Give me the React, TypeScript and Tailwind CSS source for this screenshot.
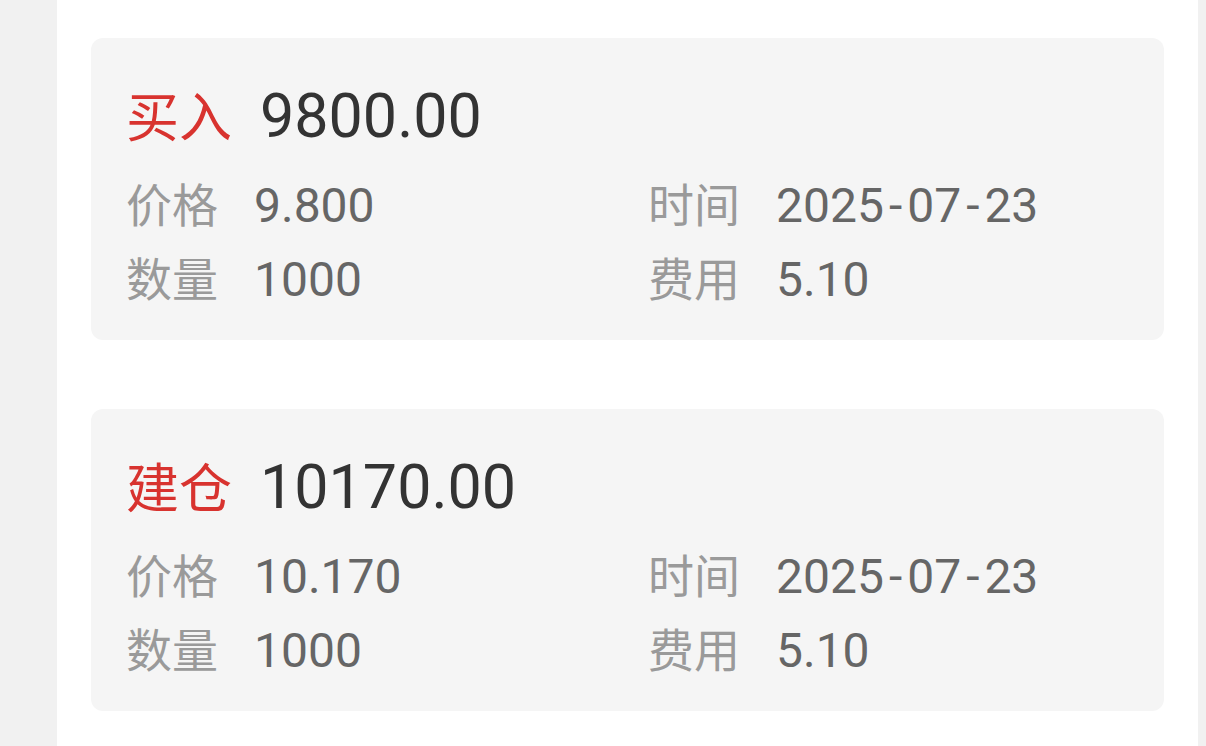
import React from "react";

interface Trade {
  type: string;
  amount: string;
  price: string;
  qty: string;
  date: string;
  fee: string;
}

const trades: Trade[] = [
  { type: "买入", amount: "9800.00", price: "9.800", qty: "1000", date: "2025-07-23", fee: "5.10" },
  { type: "建仓", amount: "10170.00", price: "10.170", qty: "1000", date: "2025-07-23", fee: "5.10" },
];

// the hyphens in the date are drawn wider in the screenshot font
const DateText = ({ value }: { value: string }) => {
  const parts = value.split("-");
  return (
    <>
      {parts.map((p, i) => (
        <React.Fragment key={i}>
          {i > 0 && <span className="mx-[5px]">-</span>}
          {p}
        </React.Fragment>
      ))}
    </>
  );
};

const Field = ({ label, children }: { label: string; children: React.ReactNode }) => (
  <div className="flex items-baseline leading-[73px]">
    <span className="w-[128px] text-[46px] text-[#9a9a9a]">{label}</span>
    <span className="text-[48px] text-[#666666]">{children}</span>
  </div>
);

const TradeCard = ({ trade }: { trade: Trade }) => (
  <div className="h-[302px] rounded-[12px] bg-[#f5f5f5] pl-[35px] pt-[48px]">
    <div className="flex items-baseline leading-[60px]">
      <span className="text-[53px] text-[#d8332f]">{trade.type}</span>
      <span className="ml-[28px] text-[61px] text-[#333333]">{trade.amount}</span>
    </div>
    <div className="mt-[20px] grid grid-cols-[522px_1fr]">
      <Field label="价格">{trade.price}</Field>
      <Field label="时间">
        <DateText value={trade.date} />
      </Field>
      <Field label="数量">{trade.qty}</Field>
      <Field label="费用">{trade.fee}</Field>
    </div>
  </div>
);

export default function App() {
  return (
    <div className="flex h-[746px] w-[1206px] overflow-hidden bg-[#f1f1f1] font-['Roboto','Noto_Sans_CJK_SC',sans-serif]">
      <div className="w-[57px] shrink-0" />
      <div className="flex flex-1 flex-col gap-[69px] bg-white px-[34px] pt-[38px]">
        {trades.map((t) => (
          <TradeCard key={t.type} trade={t} />
        ))}
      </div>
      <div className="w-[8px] shrink-0" />
    </div>
  );
}
